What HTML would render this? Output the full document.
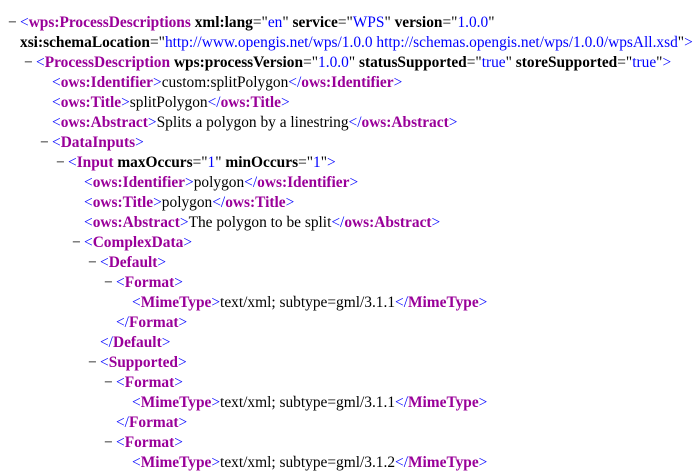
<!DOCTYPE html>
<html><head><meta charset="utf-8"><style>
body{margin:0;background:#fff;width:697px;height:462px;overflow:hidden;font-family:"Liberation Serif","Times New Roman",serif;font-size:15.4px;color:#000}
.l{position:absolute;white-space:pre;line-height:20px;height:20px}
.m{position:absolute;margin-left:-12px;color:#000}
.b{color:#0000ff}
.t{color:#990099;font-weight:bold}
.a{font-weight:bold;color:#000}
.v{color:#0000ff}
</style></head><body>
<div class="l" style="left:20px;top:13px"><span class="m">−</span><span class="b">&lt;</span><span class="t">wps:ProcessDescriptions</span> <span class="a">xml:lang</span>="<span class="v">en</span>" <span class="a">service</span>="<span class="v">WPS</span>" <span class="a">version</span>="<span class="v">1.0.0</span>"</div>
<div class="l" style="left:20px;top:33px"><span class="a">xsi:schemaLocation</span>="<span class="v">http://www.opengis.net/wps/1.0.0 http://schemas.opengis.net/wps/1.0.0/wpsAll.xsd</span>"<span class="b">&gt;</span></div>
<div class="l" style="left:36px;top:53px"><span class="m">−</span><span class="b">&lt;</span><span class="t">ProcessDescription</span> <span class="a">wps:processVersion</span>="<span class="v">1.0.0</span>" <span class="a">statusSupported</span>="<span class="v">true</span>" <span class="a">storeSupported</span>="<span class="v">true</span>"<span class="b">&gt;</span></div>
<div class="l" style="left:52px;top:73px"><span class="b">&lt;</span><span class="t">ows:Identifier</span><span class="b">&gt;</span>custom:splitPolygon<span class="b">&lt;/</span><span class="t">ows:Identifier</span><span class="b">&gt;</span></div>
<div class="l" style="left:52px;top:93px"><span class="b">&lt;</span><span class="t">ows:Title</span><span class="b">&gt;</span>splitPolygon<span class="b">&lt;/</span><span class="t">ows:Title</span><span class="b">&gt;</span></div>
<div class="l" style="left:52px;top:113px"><span class="b">&lt;</span><span class="t">ows:Abstract</span><span class="b">&gt;</span>Splits a polygon by a linestring<span class="b">&lt;/</span><span class="t">ows:Abstract</span><span class="b">&gt;</span></div>
<div class="l" style="left:52px;top:133px"><span class="m">−</span><span class="b">&lt;</span><span class="t">DataInputs</span><span class="b">&gt;</span></div>
<div class="l" style="left:68px;top:153px"><span class="m">−</span><span class="b">&lt;</span><span class="t">Input</span> <span class="a">maxOccurs</span>="<span class="v">1</span>" <span class="a">minOccurs</span>="<span class="v">1</span>"<span class="b">&gt;</span></div>
<div class="l" style="left:84px;top:173px"><span class="b">&lt;</span><span class="t">ows:Identifier</span><span class="b">&gt;</span>polygon<span class="b">&lt;/</span><span class="t">ows:Identifier</span><span class="b">&gt;</span></div>
<div class="l" style="left:84px;top:193px"><span class="b">&lt;</span><span class="t">ows:Title</span><span class="b">&gt;</span>polygon<span class="b">&lt;/</span><span class="t">ows:Title</span><span class="b">&gt;</span></div>
<div class="l" style="left:84px;top:213px"><span class="b">&lt;</span><span class="t">ows:Abstract</span><span class="b">&gt;</span>The polygon to be split<span class="b">&lt;/</span><span class="t">ows:Abstract</span><span class="b">&gt;</span></div>
<div class="l" style="left:84px;top:233px"><span class="m">−</span><span class="b">&lt;</span><span class="t">ComplexData</span><span class="b">&gt;</span></div>
<div class="l" style="left:100px;top:253px"><span class="m">−</span><span class="b">&lt;</span><span class="t">Default</span><span class="b">&gt;</span></div>
<div class="l" style="left:116px;top:273px"><span class="m">−</span><span class="b">&lt;</span><span class="t">Format</span><span class="b">&gt;</span></div>
<div class="l" style="left:132px;top:293px"><span class="b">&lt;</span><span class="t">MimeType</span><span class="b">&gt;</span>text/xml; subtype=gml/3.1.1<span class="b">&lt;/</span><span class="t">MimeType</span><span class="b">&gt;</span></div>
<div class="l" style="left:116px;top:313px"><span class="b">&lt;/</span><span class="t">Format</span><span class="b">&gt;</span></div>
<div class="l" style="left:100px;top:333px"><span class="b">&lt;/</span><span class="t">Default</span><span class="b">&gt;</span></div>
<div class="l" style="left:100px;top:353px"><span class="m">−</span><span class="b">&lt;</span><span class="t">Supported</span><span class="b">&gt;</span></div>
<div class="l" style="left:116px;top:373px"><span class="m">−</span><span class="b">&lt;</span><span class="t">Format</span><span class="b">&gt;</span></div>
<div class="l" style="left:132px;top:393px"><span class="b">&lt;</span><span class="t">MimeType</span><span class="b">&gt;</span>text/xml; subtype=gml/3.1.1<span class="b">&lt;/</span><span class="t">MimeType</span><span class="b">&gt;</span></div>
<div class="l" style="left:116px;top:413px"><span class="b">&lt;/</span><span class="t">Format</span><span class="b">&gt;</span></div>
<div class="l" style="left:116px;top:433px"><span class="m">−</span><span class="b">&lt;</span><span class="t">Format</span><span class="b">&gt;</span></div>
<div class="l" style="left:132px;top:453px"><span class="b">&lt;</span><span class="t">MimeType</span><span class="b">&gt;</span>text/xml; subtype=gml/3.1.2<span class="b">&lt;/</span><span class="t">MimeType</span><span class="b">&gt;</span></div>
</body></html>
